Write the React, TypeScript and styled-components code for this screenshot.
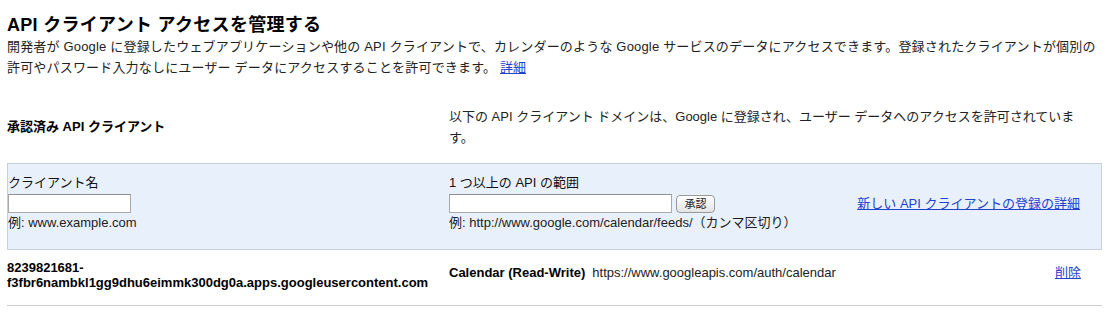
import React from "react";
import styled, { createGlobalStyle } from "styled-components";

const Global = createGlobalStyle`
  html, body { margin: 0; padding: 0; background: #fff; }
  body {
    font-family: "Liberation Sans", Arial, "Noto Sans CJK JP", sans-serif;
    font-size: 13px;
    color: #222;
  }
`;

const Page = styled.div`
  padding: 0 7px;
  width: 1095px;
`;

const Title = styled.h1`
  margin: 14px 0 0;
  font-size: 18px;
  line-height: 22px;
  font-weight: bold;
  letter-spacing: 0.3px;
  color: #000;
`;

const Description = styled.p`
  margin: 0;
  line-height: 21px;
  letter-spacing: 0.18px;
`;

const Link = styled.a`
  color: #2241cf;
  text-decoration: underline;
  cursor: pointer;
  letter-spacing: 0;
`;

const HeaderRow = styled.div`
  display: grid;
  grid-template-columns: 442px 1fr;
  align-items: center;
  margin-top: 28px;
  margin-bottom: 15px;
`;

const SectionLabel = styled.div`
  font-weight: bold;
  color: #000;
  line-height: 16px;
`;

const Intro = styled.p`
  margin: 0;
  width: 636px;
  line-height: 21px;
`;

const FormBox = styled.div`
  display: grid;
  grid-template-columns: 441px 1fr auto;
  align-items: center;
  background: #e8f0fc;
  border: 1px solid #c9cfd8;
  padding: 10px 21px 18px 0;
`;

const Field = styled.div`
  display: flex;
  flex-direction: column;
  align-items: flex-start;
`;

const FieldLabel = styled.label`
  line-height: 18px;
  margin-bottom: 2px;
  color: #111;
`;

const InputLine = styled.div`
  display: flex;
  align-items: center;
  gap: 4px;
`;

const TextInput = styled.input<{ $w: number }>`
  box-sizing: border-box;
  width: ${(p) => p.$w}px;
  height: 19px;
  margin: 0;
  padding: 1px 3px;
  border: 1px solid #a9a9a9;
  border-top-color: #8e8e8e;
  background: #fff;
  font: inherit;
  outline: none;
`;

const Button = styled.button`
  box-sizing: border-box;
  width: 39px;
  height: 18px;
  margin: 0;
  padding: 0;
  border: 1px solid #9a9a9a;
  border-radius: 4px;
  background: linear-gradient(#ffffff, #e4e4e4);
  font-family: "Liberation Sans", "Noto Sans CJK JP", sans-serif;
  font-size: 11px;
  line-height: 16px;
  color: #222;
`;

const Example = styled.div`
  margin-top: 2px;
  line-height: 16px;
  color: #222;
`;

const DataRow = styled.div`
  display: grid;
  grid-template-columns: 442px 1fr auto;
  align-items: start;
  padding: 10px 21px 15px 0;
  border-bottom: 1px solid #cccccc;
`;

const ClientId = styled.div`
  font-weight: bold;
  color: #000;
  line-height: 15px;
`;

const Scope = styled.div`
  margin-top: 5px;
  line-height: 16px;
`;

const ScopeName = styled.b`
  color: #000;
  margin-right: 7px;
`;

const RowAction = styled.div`
  margin-top: 5px;
  line-height: 16px;
`;

export default function App() {
  return (
    <>
      <Global />
      <Page>
        <Title>API クライアント アクセスを管理する</Title>
        <Description>
          開発者が Google に登録したウェブアプリケーションや他の API クライアントで、カレンダーのような Google サービスのデータにアクセスできます。登録されたクライアントが個別の許可やパスワード入力なしにユーザー データにアクセスすることを許可できます。{" "}
          <Link>詳細</Link>
        </Description>

        <HeaderRow>
          <SectionLabel>承認済み API クライアント</SectionLabel>
          <Intro>
            以下の API クライアント ドメインは、Google に登録され、ユーザー データへのアクセスを許可されています。
          </Intro>
        </HeaderRow>

        <FormBox>
          <Field>
            <FieldLabel>クライアント名</FieldLabel>
            <TextInput $w={123} type="text" />
            <Example>例: www.example.com</Example>
          </Field>
          <Field>
            <FieldLabel>1 つ以上の API の範囲</FieldLabel>
            <InputLine>
              <TextInput $w={223} type="text" />
              <Button type="button">承認</Button>
            </InputLine>
            <Example>例: http://www.google.com/calendar/feeds/（カンマ区切り）</Example>
          </Field>
          <Link>新しい API クライアントの登録の詳細</Link>
        </FormBox>

        <DataRow>
          <ClientId>
            8239821681-
            <br />
            f3fbr6nambkl1gg9dhu6eimmk300dg0a.apps.googleusercontent.com
          </ClientId>
          <Scope>
            <ScopeName>Calendar (Read-Write)</ScopeName>
            https://www.googleapis.com/auth/calendar
          </Scope>
          <RowAction>
            <Link>削除</Link>
          </RowAction>
        </DataRow>
      </Page>
    </>
  );
}
